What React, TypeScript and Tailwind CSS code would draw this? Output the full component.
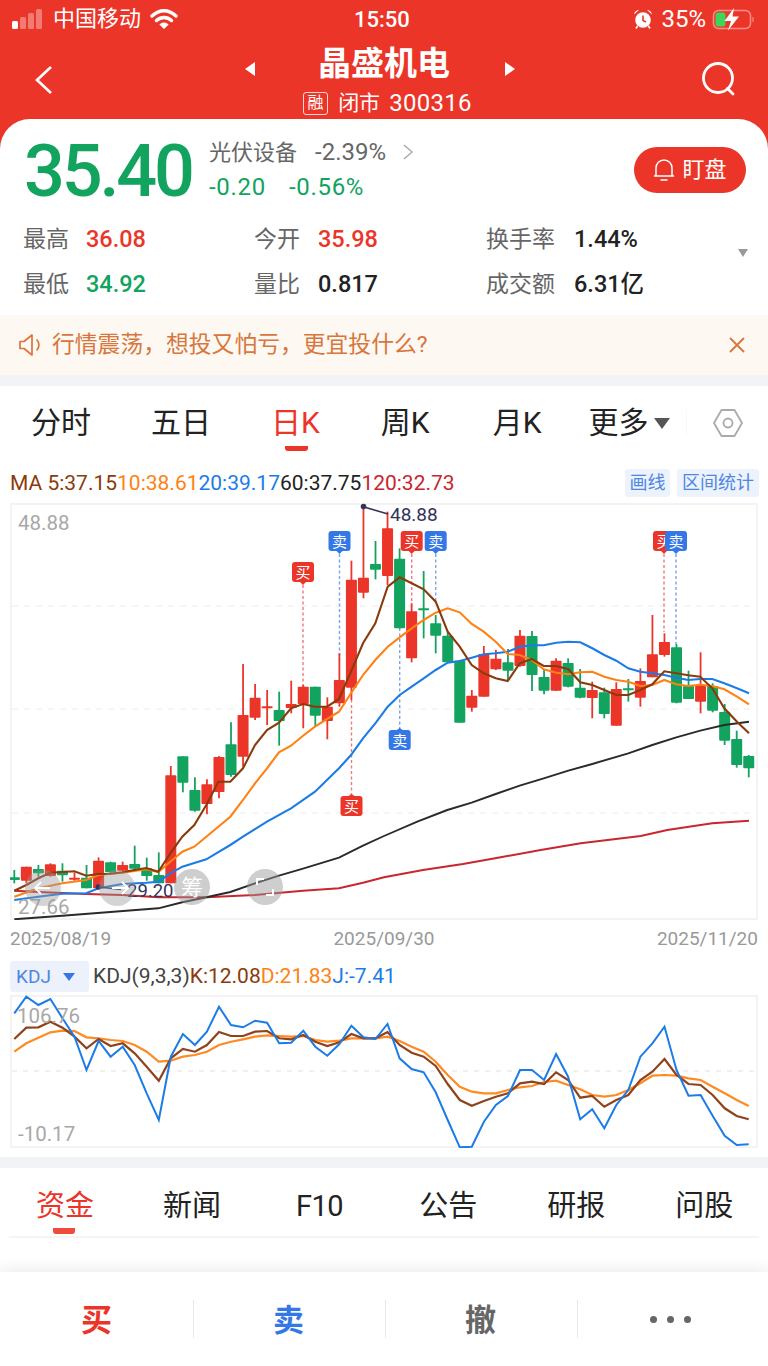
import React from "react";

const RED = "#ec3529";
const GREEN = "#12a35f";
const STEP = 12.04;
const X0 = 14.3;

// [isRed, wickTop, bodyTop, bodyBottom, wickBottom] (3x crop units)
const candles: [number, number, number, number, number][] = [
  [0, 1110, 1132, 1140, 1150], [1, 1100, 1100, 1142, 1150], [0, 1095, 1107, 1120, 1130], [1, 1090, 1093, 1128, 1130],
  [0, 1090, 1112, 1126, 1145], [1, 1118, 1133, 1137, 1142], [0, 1095, 1133, 1165, 1165], [1, 1072, 1082, 1165, 1165],
  [0, 1085, 1087, 1117, 1120], [1, 1085, 1095, 1112, 1120], [0, 1037, 1092, 1106, 1110], [0, 1073, 1105, 1128, 1142],
  [0, 1057, 1125, 1150, 1150], [1, 798, 826, 1150, 1150], [0, 769, 769, 848, 877], [0, 832, 870, 932, 935],
  [1, 838, 853, 912, 943], [1, 768, 771, 876, 895], [0, 667, 733, 825, 830], [1, 492, 645, 770, 800],
  [1, 552, 593, 653, 660], [1, 570, 619, 624, 675], [0, 575, 630, 663, 737], [1, 542, 612, 624, 640],
  [1, 555, 560, 612, 685], [0, 560, 560, 647, 678], [1, 592, 620, 663, 718], [1, 460, 540, 610, 620],
  [1, 182, 239, 563, 600], [1, 20, 233, 278, 295], [0, 123, 192, 209, 238], [1, 35, 85, 228, 255],
  [0, 145, 176, 385, 385], [1, 310, 334, 475, 487], [0, 213, 325, 330, 415], [0, 345, 370, 407, 460],
  [0, 395, 407, 487, 487], [0, 480, 482, 668, 668], [1, 570, 587, 623, 635], [1, 438, 462, 590, 590],
  [1, 450, 476, 508, 510], [0, 447, 487, 512, 540], [1, 390, 407, 498, 500], [0, 393, 408, 525, 573],
  [0, 510, 531, 572, 583], [1, 475, 482, 572, 573], [0, 475, 489, 560, 562], [0, 507, 563, 593, 595],
  [1, 545, 570, 594, 655], [0, 563, 577, 642, 655], [1, 547, 567, 677, 677], [0, 537, 565, 569, 605],
  [1, 505, 543, 593, 620], [1, 345, 463, 532, 532], [1, 400, 426, 465, 470], [0, 433, 442, 608, 610],
  [0, 512, 558, 597, 597], [1, 457, 558, 605, 640], [0, 550, 558, 632, 637], [0, 612, 636, 722, 735],
  [0, 692, 717, 795, 803], [0, 765, 768, 805, 832],
];

type P = [number, number];
const line = (a: P[], b: P[]) =>
  [...a.map(([x, y]) => [x / 3, 500 + y / 3]), ...b.map(([x, y]) => [384 + x / 3, 500 + y / 3])]
    .map(([x, y]) => `${x.toFixed(1)},${y.toFixed(1)}`)
    .join(" ");

const ma5 = line(
  [[43, 1172], [79, 1155], [115, 1135], [151, 1118], [187, 1116], [223, 1114], [259, 1127], [295, 1122], [331, 1121], [367, 1117], [403, 1110], [439, 1104], [475, 1115], [511, 1060], [547, 1010], [583, 975], [619, 915], [655, 845], [691, 845], [729, 805], [765, 735], [801, 690], [837, 668], [873, 625], [909, 612], [945, 620], [981, 620], [1017, 597], [1053, 515], [1089, 430], [1126, 370]],
  [[11, 260], [47, 232], [83, 250], [119, 268], [155, 305], [191, 395], [227, 440], [263, 495], [299, 520], [335, 535], [371, 543], [407, 490], [443, 477], [479, 498], [517, 498], [553, 508], [589, 547], [625, 555], [661, 570], [697, 585], [733, 585], [769, 570], [805, 553], [841, 514], [877, 520], [913, 526], [949, 530], [985, 565], [1021, 625], [1059, 665], [1095, 700]]
);
const ma10 = line(
  [[43, 1190], [115, 1165], [187, 1150], [259, 1140], [295, 1125], [367, 1118], [439, 1108], [475, 1116], [511, 1085], [547, 1055], [583, 1040], [619, 1010], [655, 980], [691, 950], [729, 900], [765, 850], [801, 805], [837, 757], [873, 737], [909, 707], [945, 680], [981, 657], [1017, 635], [1053, 580], [1089, 525], [1126, 480]],
  [[11, 440], [47, 412], [83, 385], [119, 360], [155, 338], [191, 325], [227, 337], [263, 372], [299, 395], [335, 425], [371, 462], [407, 465], [443, 480], [479, 508], [517, 518], [553, 523], [589, 517], [625, 515], [661, 530], [697, 540], [733, 545], [769, 558], [805, 555], [841, 540], [877, 553], [913, 558], [949, 554], [985, 558], [1021, 568], [1059, 590], [1095, 613]]
);
const ma20 = line(
  [[43, 1200], [115, 1190], [187, 1181], [259, 1180], [295, 1165], [367, 1152], [439, 1148], [475, 1145], [511, 1120], [547, 1100], [619, 1078], [691, 1035], [729, 1010], [801, 965], [873, 925], [945, 875], [1017, 805], [1053, 765], [1089, 715], [1126, 670]],
  [[11, 620], [47, 585], [83, 560], [119, 535], [155, 510], [191, 488], [227, 483], [263, 473], [299, 463], [335, 460], [371, 455], [407, 440], [443, 436], [479, 436], [517, 428], [553, 425], [589, 427], [625, 445], [661, 465], [697, 482], [733, 505], [769, 515], [805, 520], [841, 525], [877, 533], [913, 540], [949, 537], [985, 537], [1021, 550], [1059, 565], [1095, 580]]
);
const ma60 = line(
  [[43, 1258], [187, 1247], [331, 1236], [475, 1225], [547, 1207], [619, 1192], [691, 1176], [765, 1150], [837, 1127], [909, 1106], [1017, 1073], [1089, 1037]],
  [[0, 1008], [100, 965], [190, 930], [263, 908], [335, 882], [407, 857], [479, 835], [553, 812], [625, 792], [733, 760], [805, 735], [877, 712], [949, 692], [1021, 675], [1095, 665]]
);
const ma120 = line(
  [[43, 1172], [115, 1176], [259, 1182], [367, 1185], [475, 1192], [619, 1192], [765, 1185], [909, 1172], [1017, 1165], [1089, 1148]],
  [[0, 1132], [117, 1110], [237, 1092], [350, 1072], [470, 1050], [590, 1030], [770, 1008], [850, 990], [985, 970], [1095, 962]]
);

const J = [250, 200, 225, 207, 265, 320, 420, 333, 380, 350, 405, 490, 570, 380, 312, 345, 305, 230, 285, 292, 272, 278, 340, 338, 302, 350, 377, 342, 287, 322, 327, 282, 385, 417, 427, 487, 570, 652, 650, 575, 525, 498, 420, 420, 450, 372, 440, 568, 538, 595, 525, 480, 380, 340, 290, 420, 497, 495, 557, 617, 645, 643];
const K = [327, 293, 292, 275, 293, 320, 355, 327, 348, 340, 370, 410, 452, 385, 357, 365, 345, 306, 318, 318, 305, 303, 325, 328, 315, 335, 348, 337, 312, 325, 325, 306, 345, 368, 380, 408, 462, 510, 527, 513, 500, 490, 460, 455, 462, 427, 450, 503, 498, 530, 510, 495, 450, 425, 387, 435, 462, 465, 495, 535, 558, 568];
const D = [365, 340, 323, 307, 302, 303, 322, 325, 330, 333, 345, 365, 395, 392, 380, 375, 365, 345, 335, 328, 320, 316, 318, 320, 318, 330, 335, 332, 325, 325, 325, 320, 333, 350, 365, 395, 435, 470, 485, 490, 490, 480, 472, 468, 456, 452, 465, 478, 495, 500, 495, 480, 460, 437, 435, 437, 445, 450, 470, 490, 510, 528];
const kdj = (v: number[]) => v.map((y, i) => `${(X0 + i * STEP).toFixed(1)},${(930 + y / 3).toFixed(1)}`).join(" ");

const signals: { x: number; y: number; t: "买" | "卖"; down?: boolean; to: number }[] = [
  { x: 303, y: 562, t: "买", to: 686 },
  { x: 339.5, y: 531, t: "卖", to: 660 },
  { x: 351.5, y: 796, t: "买", down: true, to: 700 },
  { x: 399.7, y: 730, t: "卖", down: true, to: 628 },
  { x: 411.7, y: 531, t: "买", to: 605 },
  { x: 435.7, y: 531, t: "卖", to: 602 },
  { x: 664, y: 531, t: "买", to: 632 },
  { x: 676, y: 531, t: "卖", to: 645 },
];

function Signal({ s }: { s: (typeof signals)[number] }) {
  const c = s.t === "买" ? RED : "#3478e8";
  return (
    <g>
      <rect x={s.x - 11} y={s.y} width={22} height={20} rx={3} fill={c} />
      {s.down ? (
        <path d={`M${s.x - 3} ${s.y} L${s.x} ${s.y - 2} L${s.x + 3} ${s.y} Z`} fill={c} />
      ) : (
        <path d={`M${s.x - 3} ${s.y + 20} L${s.x} ${s.y + 23} L${s.x + 3} ${s.y + 20} Z`} fill={c} />
      )}
      <text x={s.x} y={s.y + 15.5} textAnchor="middle" fontSize="15" fill="#fff">{s.t}</text>
    </g>
  );
}

function Signals() {
  return (
    <>
      {signals.map((s, i) => (
        <line key={i} x1={s.x} x2={s.x} y1={s.down ? s.y : s.y + 23} y2={s.to} stroke={s.t === "买" ? "#f0787a" : "#7aa3ee"} strokeWidth="1.4" strokeDasharray="3 2.5" />
      ))}
    </>
  );
}

function KChart() {
  return (
    <div className="relative w-[748px] h-[417px] mx-[10px] border-2 border-[#f3f3f3]">
      <svg className="absolute left-[-2px] top-[-2px]" width="748" height="417" viewBox="10 503 748 417" style={{ fontFamily: "Roboto, 'Noto Sans CJK SC', sans-serif" }}>
        {[606, 709, 813].map((y) => (
          <line key={y} x1="12" x2="756" y1={y} y2={y} stroke="#ececec" strokeWidth="1" strokeDasharray="6 6" />
        ))}
        <Signals />
        {candles.map(([r, wt, bt, bb, wb], i) => {
          const x = X0 + i * STEP;
          const c = r ? RED : GREEN;
          return (
            <g key={i}>
              <line x1={x} x2={x} y1={500 + wt / 3} y2={500 + wb / 3} stroke={c} strokeWidth="1.8" />
              <rect x={x - 5.5} y={500 + bt / 3} width={11} height={Math.max((bb - bt) / 3, 2)} rx={0.8} fill={c} />
            </g>
          );
        })}
        <polyline points={ma120} fill="none" stroke="#c9262f" strokeWidth="2" />
        <polyline points={ma60} fill="none" stroke="#2a2a2a" strokeWidth="1.9" />
        <polyline points={ma20} fill="none" stroke="#1b7ce8" strokeWidth="2.1" />
        <polyline points={ma10} fill="none" stroke="#ff8113" strokeWidth="2.1" />
        <polyline points={ma5} fill="none" stroke="#8b3a0c" strokeWidth="2.1" />
        {signals.map((s, i) => (
          <Signal key={i} s={s} />
        ))}
        <text x="18" y="530" fontSize="20.5" fill="#a8a8a8">48.88</text>
        <text x="18" y="914" fontSize="20.5" fill="#a8a8a8">27.66</text>
        <circle cx="363.5" cy="506.5" r="2.8" fill="#33335c" />
        <line x1="364" y1="507" x2="388" y2="514" stroke="#33335c" strokeWidth="1.6" />
        <text x="390" y="521" fontSize="19" fill="#33335c">48.88</text>
        <circle cx="98.5" cy="887" r="2.8" fill="#33335c" />
        <line x1="99" y1="887" x2="121" y2="889.5" stroke="#33335c" strokeWidth="1.6" />
        <text x="127" y="897" fontSize="18.5" fill="#33335c">29.20</text>
        {/* floating round buttons */}
        <circle cx="43" cy="888" r="18" fill="#999" fillOpacity="0.42" />
        <path d="M50 888H35M41 882l-6 6 6 6" stroke="#fff" strokeWidth="1.8" fill="none" />
        <circle cx="117" cy="888" r="18" fill="#999" fillOpacity="0.42" />
        <path d="M112 888H128M122 882l6 6-6 6" stroke="#fff" strokeWidth="1.8" fill="none" />
        <circle cx="192" cy="887" r="18" fill="#999" fillOpacity="0.48" />
        <text x="192" y="895" textAnchor="middle" fontSize="22" fill="#fff">筹</text>
        <circle cx="265" cy="887" r="18" fill="#999" fillOpacity="0.48" />
        <path d="M257 885v-6h7M273 889v6h-7" stroke="#fff" strokeWidth="2" fill="none" />
      </svg>
    </div>
  );
}

function KdjChart() {
  return (
    <div className="relative w-[748px] h-[153px] mx-[10px] border-2 border-[#f3f3f3]">
      <svg className="absolute left-[-2px] top-[-2px]" width="748" height="153" viewBox="10 995 748 153" style={{ fontFamily: "Roboto, sans-serif" }}>
        <line x1="12" x2="756" y1="1071" y2="1071" stroke="#ececec" strokeWidth="1.5" strokeDasharray="5 6" />
        <polyline points={kdj(D)} fill="none" stroke="#ff8a23" strokeWidth="2.2" />
        <polyline points={kdj(K)} fill="none" stroke="#8f431c" strokeWidth="2.2" />
        <polyline points={kdj(J)} fill="none" stroke="#1b7ce8" strokeWidth="2" />
        <text x="17" y="1023" fontSize="20.5" fill="#a8a8a8">106.76</text>
        <text x="18" y="1141" fontSize="20.5" fill="#a8a8a8">-10.17</text>
      </svg>
    </div>
  );
}

function StatusBar() {
  return (
    <div className="h-[38px] flex items-center text-white text-[22px] relative">
      <svg width="34" height="22" viewBox="0 0 34 22" className="ml-[12px]">
        <rect x="0" y="13" width="6" height="8" rx="1.5" fill="#fff" />
        <rect x="8" y="9" width="6" height="12" rx="1.5" fill="#fff" fillOpacity="0.35" />
        <rect x="16" y="5" width="6" height="16" rx="1.5" fill="#fff" fillOpacity="0.35" />
        <rect x="24" y="1" width="6" height="20" rx="1.5" fill="#fff" fillOpacity="0.35" />
      </svg>
      <span className="ml-[7px] leading-[40px]">中国移动</span>
      <svg width="28" height="22" viewBox="0 0 28 22" className="ml-[9px]" fill="none" stroke="#fff" strokeLinecap="round">
        <path d="M2 8C9.5 1 18.5 1 26 8" strokeWidth="3.4" />
        <path d="M6.5 12.5C11 8.5 17 8.5 21.5 12.5" strokeWidth="3.4" />
        <path d="M10.5 16.5C12.5 15 15.5 15 17.5 16.5L14 20Z" fill="#fff" strokeWidth="1.5" />
      </svg>
      <span className="absolute left-[354px] top-0 leading-[40px] font-medium">15:50</span>
      <div className="ml-auto mr-[10px] flex items-center">
        <svg width="20" height="20" viewBox="0 0 20 20">
          <circle cx="10" cy="11" r="7.8" fill="#fff" />
          <path d="M10 6.5V11.5L13 13" stroke={RED} strokeWidth="1.6" fill="none" />
          <path d="M1 5.5C1.5 2.5 3.5 1 6 1ZM19 5.5C18.5 2.5 16.5 1 14 1Z" fill="#fff" />
          <path d="M4.5 17L3 19.5M15.5 17L17 19.5" stroke="#fff" strokeWidth="1.5" />
        </svg>
        <span className="ml-[8px] leading-[40px] text-[24px]">35%</span>
        <svg width="46" height="24" viewBox="0 0 46 24" className="ml-[6px]">
          <rect x="1.5" y="3.5" width="37" height="18" rx="5" fill="none" stroke="#fff" strokeOpacity="0.45" strokeWidth="1.5" />
          <rect x="3.5" y="5.5" width="10" height="14" rx="2.5" fill="#3fd45a" />
          <path d="M40.5 9.5c1.6.5 1.6 5.5 0 6z" fill="#fff" fillOpacity="0.5" />
          <path d="M22 1L12.5 14H19L16 23.5L27 9.5H20.5Z" fill="#fff" />
        </svg>
      </div>
    </div>
  );
}

function NavBar() {
  return (
    <div className="h-[81px] grid grid-cols-[1fr_auto_1fr] text-white">
      <div className="flex items-start pl-[34px] pt-[27px]">
        <svg width="20" height="30" viewBox="0 0 20 30" fill="none" stroke="#fff" strokeWidth="2.6">
          <path d="M17 2L3 15L17 28" />
        </svg>
      </div>
      <div className="flex flex-col items-center">
        <div className="flex items-center mt-[5px] h-[42px]">
          <div className="w-0 h-0 border-y-[7px] border-y-transparent border-r-[10px] border-r-white mr-[63px] mt-[10px]" />
          <span className="text-[33px] font-bold leading-[42px]">晶盛机电</span>
          <div className="w-0 h-0 border-y-[7px] border-y-transparent border-l-[10px] border-l-white ml-[55px] mr-[8px] mt-[10px]" />
        </div>
        <div className="flex items-center mt-[5px] h-[26px] pl-[7px]">
          <span className="w-[25px] h-[23px] border border-white/80 rounded-[3px] text-[16px] leading-[20px] text-center mr-[10px]">融</span>
          <span className="text-[21px] leading-[26px]">闭市</span>
          <span className="text-[24px] leading-[26px] ml-[9px] tracking-[0.3px]">300316</span>
        </div>
      </div>
      <div className="flex items-start justify-end pr-[31px] pt-[23px]">
        <svg width="36" height="36" viewBox="0 0 36 36" fill="none" stroke="#fff" strokeWidth="2.8">
          <circle cx="17" cy="17" r="14.5" />
          <path d="M26.5 27.5L32 33" strokeLinecap="round" />
        </svg>
      </div>
    </div>
  );
}

function Stat({ label, value, color, w }: { label: string; value: string; color: string; w: string }) {
  return (
    <div className="flex items-center h-[45px]">
      <span className={`${w} text-[23px] text-[#666] leading-[45px]`}>{label}</span>
      <span className="text-[23.5px] font-medium leading-[45px]" style={{ color }}>{value}</span>
    </div>
  );
}

function Quote() {
  return (
    <div className="bg-white rounded-t-[30px] overflow-hidden">
      <div className="h-[98px] flex items-start pl-[24px] pr-[22px]">
        <span className="text-[72px] font-medium leading-[50px] mt-[28px] tracking-[-3.2px] w-[185px]" style={{ color: GREEN }}>35.40</span>
        <div className="flex flex-col">
          <div className="flex items-center h-[32px] mt-[17px]">
            <span className="text-[22px] text-[#666]">光伏设备</span>
            <span className="text-[24px] text-[#666] ml-[18px]">-2.39%</span>
            <svg width="12" height="18" viewBox="0 0 12 18" fill="none" stroke="#aaa" strokeWidth="1.5" className="ml-[16px]">
              <path d="M2 2L10 9L2 16" />
            </svg>
          </div>
          <div className="flex items-center h-[32px] mt-[3px] text-[24px] tracking-[0.7px]" style={{ color: GREEN }}>
            <span>-0.20</span>
            <span className="ml-[23px]">-0.56%</span>
          </div>
        </div>
        <div className="ml-auto mt-[28px] w-[112px] h-[46px] rounded-full flex items-center justify-center text-white text-[22px] leading-[46px]" style={{ backgroundColor: RED }}>
          <svg width="22" height="24" viewBox="0 0 22 24" fill="none" stroke="#fff" strokeWidth="1.5" className="mr-[7px]">
            <path d="M3 17V10a8 8 0 0 1 16 0v7l1.5 1H1.5Z" strokeLinejoin="round" />
            <path d="M7.5 22h7" />
          </svg>
          盯盘
        </div>
      </div>
      <div className="flex items-start h-[89px] pl-[23px]">
        <div className="grid grid-cols-[231px_232px_1fr] flex-1">
          <Stat label="最高" value="36.08" color={RED} w="w-[63px]" />
          <Stat label="今开" value="35.98" color={RED} w="w-[64px]" />
          <Stat label="换手率" value="1.44%" color="#222" w="w-[88px]" />
          <Stat label="最低" value="34.92" color={GREEN} w="w-[63px]" />
          <Stat label="量比" value="0.817" color="#222" w="w-[64px]" />
          <Stat label="成交额" value="6.31亿" color="#222" w="w-[88px]" />
        </div>
        <div className="w-0 h-0 border-x-[5.5px] border-x-transparent border-t-[8px] border-t-[#999] mt-[32px] mr-[20px]" />
      </div>
      <div className="mt-[9px] h-[60px] bg-[#fdf8f2] flex items-center pl-[18px] pr-[23px] text-[#d8763c]">
        <svg width="26" height="26" viewBox="0 0 26 26" fill="none" stroke="#d8763c" strokeWidth="1.7" strokeLinejoin="round">
          <path d="M2 9.5H6L14 3V23L6 16.5H2Z" />
          <path d="M19 8C21.5 10.5 21.5 15.5 19 18" strokeLinecap="round" />
        </svg>
        <span className="ml-[8px] text-[22.8px] leading-[60px]">行情震荡，想投又怕亏，更宜投什么?</span>
        <svg width="16" height="16" viewBox="0 0 16 16" fill="none" stroke="#d8763c" strokeWidth="1.8" className="ml-auto">
          <path d="M1 1L15 15M15 1L1 15" />
        </svg>
      </div>
    </div>
  );
}

function PeriodTabs() {
  return (
    <div className="h-[76px] flex items-center pl-[31px] pb-[2px] text-[30px] text-[#222] leading-[70px]">
      <span>分时</span>
      <span className="ml-[60px]">五日</span>
      <span className="ml-[60px] relative" style={{ color: RED }}>
        日K
        <span className="absolute left-[14px] top-[58px] w-[23px] h-[5px] rounded-b-[3px]" style={{ backgroundColor: RED }} />
      </span>
      <span className="ml-[61px]">周K</span>
      <span className="ml-[63px]">月K</span>
      <span className="ml-[47px]">更多</span>
      <div className="w-0 h-0 border-x-[8px] border-x-transparent border-t-[11px] border-t-[#555] ml-[6px]" />
      <div className="w-px h-[28px] bg-[#f8f8f8] ml-[16px]" />
      <svg width="32" height="32" viewBox="0 0 32 32" fill="none" stroke="#aaa" strokeWidth="1.8" className="ml-[25px]">
        <path d="M9.5 3H22.5L30 16L22.5 29H9.5L2 16Z" strokeLinejoin="round" />
        <circle cx="16" cy="16" r="4.5" />
      </svg>
    </div>
  );
}

export default function App() {
  return (
    <div className="w-[768px] h-[1366px] overflow-hidden bg-white relative" style={{ fontFamily: "Roboto, 'Noto Sans CJK SC', sans-serif" }}>
      <div style={{ backgroundColor: RED }}>
        <StatusBar />
        <NavBar />
        <Quote />
      </div>
      <div className="h-[11px] bg-[#f2f3f7]" />
      <PeriodTabs />
      <div className="h-[41px] flex items-center pl-[10px] pr-[9px] text-[21px]">
        <div className="flex mt-[3px]">
          <span className="text-[#8b3a0c]">MA 5:37.15</span>
          <span className="text-[#ff8113]">10:38.61</span>
          <span className="text-[#1b7ce8]">20:39.17</span>
          <span className="text-[#222]">60:37.75</span>
          <span className="text-[#c9262f]">120:32.73</span>
        </div>
        <span className="ml-auto h-[28px] w-[45px] bg-[#edf3fd] rounded-[3px] text-[#4e86e0] text-[18px] leading-[28px] text-center">画线</span>
        <span className="ml-[7px] h-[28px] w-[82px] bg-[#edf3fd] rounded-[3px] text-[#4e86e0] text-[18px] leading-[28px] text-center">区间统计</span>
      </div>
      <KChart />
      <div className="h-[37px] flex items-center justify-between pl-[10px] pr-[10px] text-[19px] text-[#999] leading-[37px]">
        <span>2025/08/19</span>
        <span>2025/09/30</span>
        <span>2025/11/20</span>
      </div>
      <div className="mt-[4px] h-[31px] flex items-center pl-[10px] text-[21px] leading-[31px]">
        <div className="w-[79px] h-[31px] bg-[#ecf1fc] rounded-[3px] flex items-center pl-[6px] text-[#4e86e0] text-[19px]">
          <span>KDJ</span>
          <div className="w-0 h-0 border-x-[6px] border-x-transparent border-t-[8px] border-t-[#3478e8] ml-[12px]" />
        </div>
        <span className="ml-[4px] text-[#444]">KDJ(9,3,3)</span>
        <span className="text-[#8b3a0c]">K:12.08</span>
        <span className="text-[#ff8113]">D:21.83</span>
        <span className="text-[#1b7ce8]">J:-7.41</span>
      </div>
      <div className="mt-[3px]">
        <KdjChart />
      </div>
      <div className="h-[9px]" />
      <div className="h-[11px] bg-[#f2f3f7]" />
      <div className="mx-[9px] h-[70px] flex items-center border-b-2 border-b-[#f5f5f5] text-[29px] text-[#222] pl-[27px] pt-[7px] leading-[60px]">
        <span className="relative" style={{ color: RED }}>
          资金
          <span className="absolute left-[17px] top-[52px] w-[22px] h-[6px] rounded-b-[3px] bg-[#f04a3e]" />
        </span>
        <span className="ml-[69px]">新闻</span>
        <span className="ml-[75px] tracking-[-0.5px]">F10</span>
        <span className="ml-[76px]">公告</span>
        <span className="ml-[70px]">研报</span>
        <span className="ml-[70px]">问股</span>
      </div>
      <div className="absolute left-0 right-0 bottom-0 h-[94px] bg-white shadow-[0_-4px_14px_rgba(0,0,0,0.07)] grid grid-cols-[193px_192px_192px_191px] items-center text-[31px] font-bold">
        <div className="text-center h-[38px] leading-[42px]" style={{ color: RED }}>买</div>
        <div className="text-center text-[#3478e8] border-l border-l-[#e8e8e8] h-[38px] leading-[42px] pr-[2px]">卖</div>
        <div className="text-center text-[#666] border-l border-l-[#e8e8e8] h-[38px] leading-[42px] pr-[2px]">撤</div>
        <div className="flex justify-center items-center gap-[10px] border-l border-l-[#e8e8e8] h-[38px] pr-[5px]">
          <span className="w-[7px] h-[7px] rounded-full bg-[#666]" />
          <span className="w-[7px] h-[7px] rounded-full bg-[#666]" />
          <span className="w-[7px] h-[7px] rounded-full bg-[#666]" />
        </div>
      </div>
    </div>
  );
}
